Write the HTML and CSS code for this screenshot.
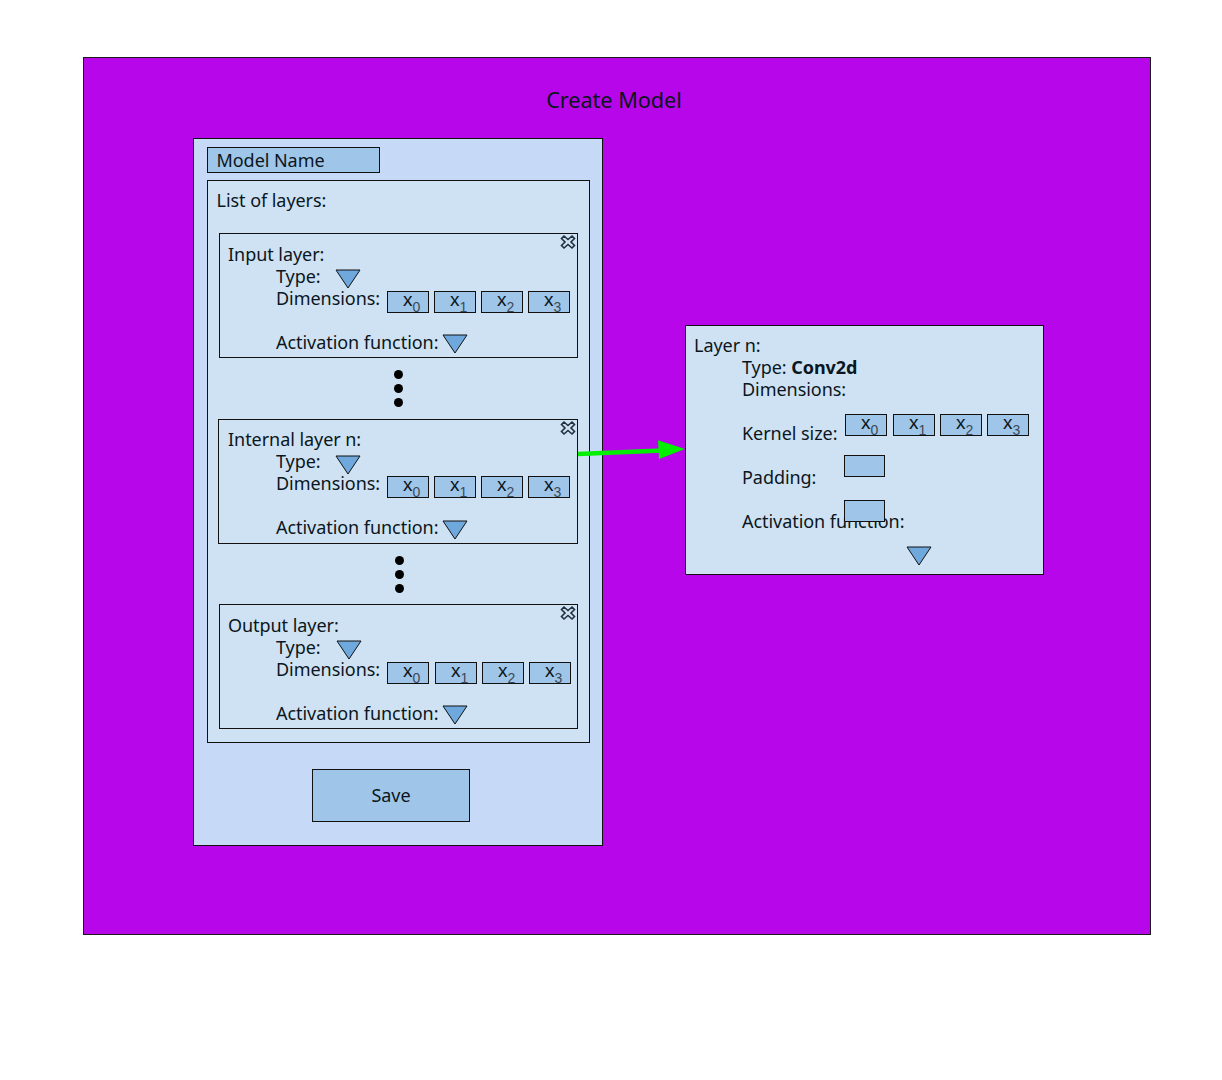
FILE: index.html
```html
<!DOCTYPE html>
<html lang="en">
<head>
    <meta charset="UTF-8">
    <meta name="viewport" content="width=device-width, initial-scale=1.0">
    <title>Create Model</title>
    <link rel="stylesheet" href="styles.css">
</head>
<body>

    <div class="canvas">
        <h1 class="canvas-title">Create Model</h1>

        <!-- Model panel -->
        <div class="model-panel">
            <div class="name-field">Model Name</div>

            <div class="layer-list">
                <div class="list-title">List of layers:</div>

                <div class="layer-card">
                    <svg class="close-icon" viewBox="0 0 16 16"><path d="M4 2 L8 5.5 L12 2 L14.5 4.5 L11 8 L14.5 11.5 L12 14 L8 10.5 L4 14 L1.5 11.5 L5 8 L1.5 4.5 Z"/></svg>
                    <div class="layer-name">Input layer:</div>
                    <div class="row">
                        <span>Type:</span>
                        <svg class="arrow-down type-arrow" viewBox="0 0 26 20"><path d="M1 1 H25 L13 19 Z"/></svg>
                    </div>
                    <div class="row row-dims">
                        <span>Dimensions:</span>
                        <div class="dims">
                            <div class="dim">x<sub>0</sub></div>
                            <div class="dim">x<sub>1</sub></div>
                            <div class="dim">x<sub>2</sub></div>
                            <div class="dim">x<sub>3</sub></div>
                        </div>
                    </div>
                    <div class="row">
                        <span>Activation function:</span>
                        <svg class="arrow-down activation-arrow" viewBox="0 0 26 20"><path d="M1 1 H25 L13 19 Z"/></svg>
                    </div>
                </div>

                <div class="dots"><i></i><i></i><i></i></div>

                <div class="layer-card layer-card-wide">
                    <svg class="close-icon" viewBox="0 0 16 16"><path d="M4 2 L8 5.5 L12 2 L14.5 4.5 L11 8 L14.5 11.5 L12 14 L8 10.5 L4 14 L1.5 11.5 L5 8 L1.5 4.5 Z"/></svg>
                    <div class="layer-name">Internal layer n:</div>
                    <div class="row">
                        <span>Type:</span>
                        <svg class="arrow-down type-arrow" viewBox="0 0 26 20"><path d="M1 1 H25 L13 19 Z"/></svg>
                    </div>
                    <div class="row row-dims">
                        <span>Dimensions:</span>
                        <div class="dims">
                            <div class="dim">x<sub>0</sub></div>
                            <div class="dim">x<sub>1</sub></div>
                            <div class="dim">x<sub>2</sub></div>
                            <div class="dim">x<sub>3</sub></div>
                        </div>
                    </div>
                    <div class="row">
                        <span>Activation function:</span>
                        <svg class="arrow-down activation-arrow" viewBox="0 0 26 20"><path d="M1 1 H25 L13 19 Z"/></svg>
                    </div>
                </div>

                <div class="dots dots-last"><i></i><i></i><i></i></div>

                <div class="layer-card layer-card-output">
                    <svg class="close-icon" viewBox="0 0 16 16"><path d="M4 2 L8 5.5 L12 2 L14.5 4.5 L11 8 L14.5 11.5 L12 14 L8 10.5 L4 14 L1.5 11.5 L5 8 L1.5 4.5 Z"/></svg>
                    <div class="layer-name">Output layer:</div>
                    <div class="row">
                        <span>Type:</span>
                        <svg class="arrow-down type-arrow" viewBox="0 0 26 20"><path d="M1 1 H25 L13 19 Z"/></svg>
                    </div>
                    <div class="row row-dims">
                        <span>Dimensions:</span>
                        <div class="dims">
                            <div class="dim">x<sub>0</sub></div>
                            <div class="dim">x<sub>1</sub></div>
                            <div class="dim">x<sub>2</sub></div>
                            <div class="dim">x<sub>3</sub></div>
                        </div>
                    </div>
                    <div class="row">
                        <span>Activation function:</span>
                        <svg class="arrow-down activation-arrow" viewBox="0 0 26 20"><path d="M1 1 H25 L13 19 Z"/></svg>
                    </div>
                </div>
            </div>

            <div class="save-btn">Save</div>
        </div>

        <!-- Green connector -->
        <svg class="connector" viewBox="0 0 108 30"><path class="connector-line" d="M0 15 L84 11.4"/><path class="connector-head" d="M80 1.2 L107 10 L81 20 Z"/></svg>

        <!-- Layer detail panel -->
        <div class="detail-panel">
            <div class="layer-name">Layer n:</div>
            <div class="row"><span>Type: <strong>Conv2d</strong></span></div>
            <div class="row"><span>Dimensions:</span></div>
            <div class="row row-kernel">
                <span class="detail-label">Kernel size:</span>
                <div class="dims dims-kernel">
                    <div class="dim">x<sub>0</sub></div>
                    <div class="dim">x<sub>1</sub></div>
                    <div class="dim">x<sub>2</sub></div>
                    <div class="dim">x<sub>3</sub></div>
                </div>
            </div>
            <div class="row row-padding">
                <span class="detail-label">Padding:</span>
                <div class="dim dim-blank"></div>
            </div>
            <div class="row row-activation">
                <span>Activation function:</span>
                <div class="dim dim-blank dim-over"></div>
            </div>
            <svg class="arrow-down detail-arrow" viewBox="0 0 26 20"><path d="M1 1 H25 L13 19 Z"/></svg>
        </div>
    </div>

</body>
</html>
```

FILE: styles.css
```css
/* General Styling */
body {
    margin: 0;
    padding: 0;
    background: #ffffff;
    color: #0a1620;
    font-family: 'Noto Sans', sans-serif;
    font-size: 18px;
    line-height: 22px;
    letter-spacing: -0.05px;
}

* {
    box-sizing: border-box;
}

/* Canvas */
.canvas {
    position: relative;
    width: 1068px;
    height: 878px;
    margin: 57px 0 0 83px;
    background: #b806ea;
    border: 1px solid #1a1a1a;
}

.canvas-title {
    margin: 0;
    padding: 29px 6px 0 0;
    text-align: center;
    font-size: 21.7px;
    font-weight: 400;
    line-height: 26px;
}

/* Model panel */
.model-panel {
    position: absolute;
    left: 109px;
    top: 80px;
    width: 410px;
    height: 708px;
    padding: 8px 13px;
    background: #c6d9f6;
    border: 1px solid #111;
}

.name-field {
    width: 173px;
    height: 26px;
    padding: 1px 9px 1px 8.5px;
    background: #9fc5e8;
    border: 1px solid #111;
}

.layer-list {
    width: 383px;
    height: 563px;
    margin-top: 7px;
    padding: 8px 11px;
    background: #cfe2f3;
    border: 1px solid #111;
}

.list-title {
    margin: 0 0 22px -2.5px;
}

/* Layer cards */
.layer-card {
    position: relative;
    width: 359px;
    height: 125px;
    padding: 9px 0 0 8px;
    background: #cfe2f3;
    border: 1px solid #111;
}

.layer-card-wide {
    width: 360px;
    margin-left: -1px;
    padding: 8px 0 0 9px;
}

.close-icon {
    position: absolute;
    top: 0;
    right: 1px;
    width: 16px;
    height: 16px;
}

.close-icon path {
    fill: #cfe2f3;
    stroke: #1f3040;
    stroke-width: 1.6;
}

.row {
    display: flex;
    height: 22px;
    padding-left: 48px;
    white-space: nowrap;
}

.row-dims {
    height: 44px;
}

.dims {
    display: flex;
    gap: 5px;
    margin: 4px 0 0 7px;
}

.layer-card-output .dim:first-child,
.dims-kernel .dim:first-child {
    margin-right: 1px;
}

.dim {
    width: 42px;
    height: 22px;
    padding-left: 15px;
    background: #9fc5e8;
    border: 1px solid #111;
    font-family: 'Liberation Sans', sans-serif;
    font-size: 19px;
    line-height: 15px;
}

.dim sub {
    color: #3a4a58;
    font-size: 14px;
    line-height: 0;
    vertical-align: -6px;
}

.arrow-down {
    flex: none;
    width: 26px;
    height: 20px;
}

.arrow-down path {
    fill: #6fa8dc;
    stroke: #111;
    stroke-width: 1;
}

.type-arrow {
    margin: 4px 0 0 14px;
}

.activation-arrow {
    margin: 3px 0 0 4px;
}

.layer-card-wide .type-arrow {
    margin-top: 5px;
}

.layer-card-wide .activation-arrow {
    margin-top: 4px;
}

.layer-card-output .type-arrow {
    margin-left: 15px;
}

.dots {
    display: flex;
    flex-direction: column;
    align-items: center;
    gap: 5px;
    margin: 12px 0;
}

.dots-last {
    margin: 12px 0 11px;
    padding-left: 1px;
}

.dots i {
    width: 9px;
    height: 9px;
    border-radius: 50%;
    background: #000;
}

.save-btn {
    width: 158px;
    height: 53px;
    margin: 26px 0 0 105px;
    background: #9fc5e8;
    border: 1px solid #111;
    text-align: center;
    line-height: 51px;
}

/* Connector */
.connector {
    position: absolute;
    left: 494px;
    top: 381px;
    width: 108px;
    height: 30px;
}

.connector-line {
    fill: none;
    stroke: #00f000;
    stroke-width: 4.5;
}

.connector-head {
    fill: #00f000;
}

/* Layer detail panel */
.detail-panel {
    position: absolute;
    left: 601px;
    top: 267px;
    width: 359px;
    height: 250px;
    padding: 8px 0 0 8px;
    background: #cfe2f3;
    border: 1px solid #111;
}

.detail-label {
    width: 103px;
    flex: none;
}

.row-kernel {
    height: 44px;
    margin-top: 22px;
}

.dims-kernel {
    margin: -8px 0 0 0;
}

.row-padding {
    height: 44px;
}

.dim-blank {
    width: 41px;
    margin: -11px 0 0 -1px;
}

.row-activation {
    position: relative;
    height: 22px;
}

.dim-over {
    position: absolute;
    left: 150px;
    top: -10px;
    margin: 0;
}

.detail-arrow {
    display: block;
    margin: 14px 0 0 212px;
}
```
